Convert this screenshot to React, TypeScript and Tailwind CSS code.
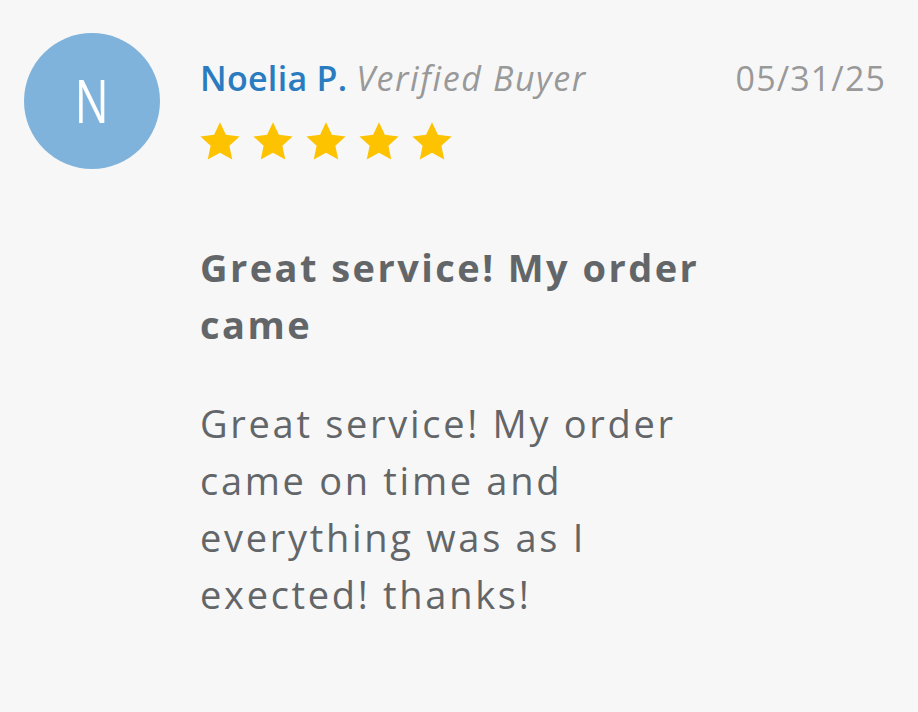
const Star = () => (
  <svg viewBox="0 0 24 24" className="w-[44px] h-[44px]" aria-hidden>
    <path
      d="M12 1.2l3.2 6.9 7.5.9-5.6 5.1 1.6 7.4L12 17.8l-6.7 3.7 1.6-7.4L1.3 9l7.5-.9z"
      fill="#fdc300"
    />
  </svg>
);

export default function App() {
  return (
    <div className="min-h-screen w-full bg-[#f7f7f7] font-['Open_Sans',sans-serif]">
      <div className="flex gap-[40px] pl-[24px] pr-[32px] pt-[33px]">
        {/* avatar */}
        <div className="shrink-0 w-[136px] h-[136px] rounded-full bg-[#80b3db] flex items-center justify-center">
          <span className="text-white text-[60px] font-normal leading-none scale-x-[0.75] -mt-[2px]">N</span>
        </div>

        <div className="flex-1">
          <div className="flex items-start justify-between pt-[28px]">
            <div className="text-[34px] leading-none">
              <span className="text-[#2a7bbf] font-semibold tracking-[0.3px]">Noelia P.</span>{' '}
              <span className="text-[#999999] italic tracking-[1.6px]">Verified Buyer</span>
            </div>
            <span className="text-[#999999] text-[34px] leading-none tracking-[1.1px]">05/31/25</span>
          </div>

          <div className="flex gap-[9px] mt-[25px] -ml-[2px]">
            <Star />
            <Star />
            <Star />
            <Star />
            <Star />
          </div>

          <div className="w-[520px] text-[#636669] text-[38px] leading-[57px]">
            <h2 className="font-bold mt-[75px] tracking-[2.45px]">Great service! My order came</h2>
            <p className="mt-[42px] tracking-[2.7px]">
              Great service! My order came on time and everything was as I exected! thanks!
            </p>
          </div>
        </div>
      </div>
    </div>
  );
}
